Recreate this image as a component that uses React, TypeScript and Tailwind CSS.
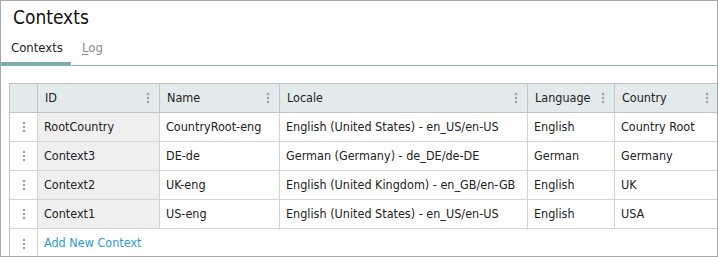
import React from 'react';

const font = { fontFamily: '"DejaVu Sans Condensed", "DejaVu Sans", Tahoma, sans-serif' };

interface Row {
  id: string;
  name: string;
  locale: string;
  language: string;
  country: string;
}

const rows: Row[] = [
  { id: 'RootCountry', name: 'CountryRoot-eng', locale: 'English (United States) - en_US/en-US', language: 'English', country: 'Country Root' },
  { id: 'Context3', name: 'DE-de', locale: 'German (Germany) - de_DE/de-DE', language: 'German', country: 'Germany' },
  { id: 'Context2', name: 'UK-eng', locale: 'English (United Kingdom) - en_GB/en-GB', language: 'English', country: 'UK' },
  { id: 'Context1', name: 'US-eng', locale: 'English (United States) - en_US/en-US', language: 'English', country: 'USA' },
];

function Kebab() {
  return (
    <svg width="4" height="12" viewBox="0 0 4 12" className="shrink-0">
      <circle cx="2" cy="2" r="1.3" fill="#a3a3a3" />
      <circle cx="2" cy="6" r="1.3" fill="#a3a3a3" />
      <circle cx="2" cy="10" r="1.3" fill="#a3a3a3" />
    </svg>
  );
}

function HeaderCell({ label, w }: { label: string; w: string }) {
  return (
    <div className={`${w} shrink-0 flex items-center justify-between pl-[7px] pr-[9px] border-r border-[#c6c6c6]`}>
      <span>{label}</span>
      <Kebab />
    </div>
  );
}

function Handle() {
  return (
    <div className="w-[28px] shrink-0 flex items-center justify-center border-r border-[#d4d4d4]">
      <Kebab />
    </div>
  );
}

export default function App() {
  return (
    <div className="w-[718px] h-[257px] border border-[#a8a8a8] bg-white overflow-hidden text-[#222]" style={font}>
      <div className="h-[34px] pl-[12px] pt-[2px] text-[19px] leading-[28px] text-[#111]">Contexts</div>

      <div className="relative h-[31px] border-b border-[#88b3b6]">
        <div className="flex h-full text-[13px]">
          <div className="w-[70px] flex flex-col">
            <div className="flex-1 pl-[10px] pt-[3px] leading-[20px] text-[#222]">Contexts</div>
            <div className="h-[3px] bg-[#80a9ae]" />
          </div>
          <div className="pl-[11px] pt-[3px] leading-[20px] text-[#8a8a8a]">
            <span className="underline underline-offset-2">L</span>og
          </div>
        </div>
      </div>

      <div className="ml-[8px] mt-[17px] border-l border-t border-[#c3c3c3] text-[12.5px] w-[800px]">
        <div className="flex h-[29px] bg-[#e3eaec] border-b border-[#c3c3c3]">
          <div className="w-[28px] shrink-0 border-r border-[#c6c6c6]" />
          <HeaderCell label="ID" w="w-[122px]" />
          <HeaderCell label="Name" w="w-[120px]" />
          <HeaderCell label="Locale" w="w-[248px]" />
          <HeaderCell label="Language" w="w-[87px]" />
          <div className="w-[103px] shrink-0 flex items-center justify-between pl-[7px] pr-[9px]">
            <span>Country</span>
            <Kebab />
          </div>
        </div>

        {rows.map((r) => (
          <div key={r.id} className="flex h-[29px] border-b border-[#d4d4d4]">
            <Handle />
            <div className="w-[122px] shrink-0 flex items-center pl-[6px] bg-[#efefef] border-r border-[#d4d4d4]">{r.id}</div>
            <div className="w-[120px] shrink-0 flex items-center pl-[6px] border-r border-[#d4d4d4]">{r.name}</div>
            <div className="w-[248px] shrink-0 flex items-center pl-[6px] border-r border-[#d4d4d4]">{r.locale}</div>
            <div className="w-[87px] shrink-0 flex items-center pl-[6px] border-r border-[#d4d4d4]">{r.language}</div>
            <div className="w-[103px] shrink-0 flex items-center pl-[6px] border-r border-[#d4d4d4]">{r.country}</div>
          </div>
        ))}

        <div className="flex h-[29px]">
          <Handle />
          <div className="flex items-center pl-[6px] text-[#2e9bd6]">Add New Context</div>
        </div>
      </div>
    </div>
  );
}
